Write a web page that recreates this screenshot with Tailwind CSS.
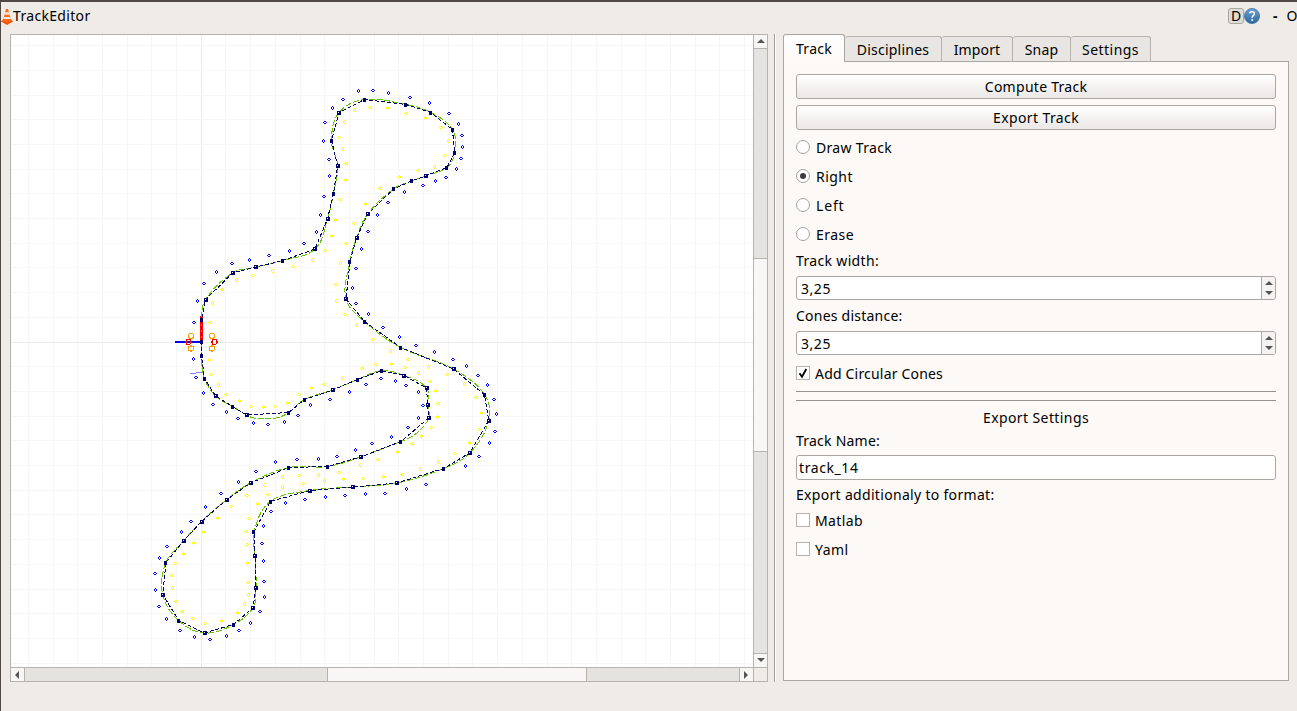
<!DOCTYPE html>
<html lang="en">
<head>
<meta charset="utf-8">
<title>TrackEditor</title>
<script src="https://cdn.jsdelivr.net/npm/@tailwindcss/browser@4"></script>
</head>
<body class="h-[711px] w-[1297px] overflow-hidden border-t-2 border-l border-[#504842] bg-[#efebe7] font-['Noto_Sans','Open_Sans',sans-serif] text-[14px] leading-none text-black">
<header class="flex h-8 items-center pb-1">
  <svg class="mt-px h-4 w-3 shrink-0" viewBox="0 0 12 16">
    <path d="M0 12.5 2.5 10h7l2.5 2.5L6 16Z" fill="#f4560a"/>
    <path d="M5 0h2l3 11.5Q6 14 2 11.5Z" fill="#ff6a14"/>
    <path d="M4.2 3.3h3.6l.7 2.4H3.5ZM3 8h6l.6 2H2.4Z" fill="#f5e7dc"/>
  </svg>
  <span data-w="77.5">TrackEditor</span>
  <div class="ml-auto flex h-full w-[69px] items-center">
    <span class="flex h-4 w-4 shrink-0 items-center justify-center rounded-[3px] border border-[#aaa6a2] bg-[#dfdbd8]">D</span>
    <svg class="h-4 w-4 shrink-0" viewBox="0 0 16 16">
      <defs><linearGradient id="help" x2="0" y2="1"><stop stop-color="#6da0cf"/><stop offset="1" stop-color="#2a689f"/></linearGradient></defs>
      <circle cx="8" cy="8" r="7.6" fill="url(#help)" stroke="#34699b" stroke-width=".7"/>
      <path d="M5.6 5.4C6 3.2 10.4 3.1 10.4 5.8 10.4 7.6 8.1 7.7 8.1 9.7" fill="none" stroke="#fff" stroke-width="1.5"/>
      <circle cx="8.1" cy="12.1" r="1" fill="#fff"/>
    </svg>
    <span class="ml-[13px] font-bold">-</span>
    <span class="ml-[9px]">O</span>
  </div>
</header>

<main class="flex h-[648px] pl-[9px]">
  <section class="grid h-[648px] w-[758px] shrink-0 grid-cols-[742px_14px] grid-rows-[632px_14px] border border-[#b6b2ae]">
    <svg id="canvas" class="h-[632px] w-[742px] bg-white" viewBox="11 35 742 632" shape-rendering="crispEdges" fill="none"></svg>
    <div class="flex flex-col border-l border-[#b6b2ae] bg-[#e4e3df]">
      <div class="flex h-[14px] shrink-0 items-center justify-center border-b border-[#b6b2ae] bg-[#f7f6f4] pb-px"><svg class="h-1 w-2" viewBox="0 0 8 4"><path d="M4 0 8 4H0Z" fill="#555"/></svg></div>
      <div class="mt-[209px] h-[194px] shrink-0 border-y border-[#b6b2ae] bg-[#f8f7f6]"></div>
      <div class="mt-auto flex h-[14px] shrink-0 items-center justify-center border-t border-[#b6b2ae] bg-[#f7f6f4] pb-px"><svg class="h-1 w-2" viewBox="0 0 8 4"><path d="M0 0H8L4 4Z" fill="#555"/></svg></div>
    </div>
    <div class="flex border-t border-[#b6b2ae] bg-[#e4e3df]">
      <div class="flex w-[14px] shrink-0 items-center justify-center border-r border-[#b6b2ae] bg-[#f7f6f4] pr-px"><svg class="h-2 w-1" viewBox="0 0 4 8"><path d="M4 0V8L0 4Z" fill="#555"/></svg></div>
      <div class="ml-[302px] w-[260px] shrink-0 border-x border-[#b6b2ae] bg-[#f8f7f6]"></div>
      <div class="ml-auto flex w-[14px] shrink-0 items-center justify-center border-l border-[#b6b2ae] bg-[#f7f6f4] pr-px"><svg class="h-2 w-1" viewBox="0 0 4 8"><path d="M0 0 4 4 0 8Z" fill="#555"/></svg></div>
    </div>
    <div class="border-t border-l border-[#b6b2ae] bg-[#efebe7]"></div>
  </section>

  <div class="ml-[6px] h-[648px] w-[2px] shrink-0 border-l border-[#a09c98] bg-white"></div>

  <section class="ml-[7px] flex h-[647px] w-[506px] shrink-0 flex-col">
    <nav class="z-10 -mb-px flex h-7 shrink-0 items-end">
      <div class="flex h-7 w-[62px] shrink-0 justify-center rounded-t-[3px] border border-b-0 border-[#aaa6a2] bg-gradient-to-b from-white to-[#fdf9f6] pt-[7px]"><span data-w="36">Track</span></div>
      <div class="flex h-[26px] w-[97px] shrink-0 justify-center rounded-t-[3px] border border-l-0 border-[#b6b2ae] border-b-[#aaa6a2] bg-[#e9e5e2] pt-[6px]"><span data-w="72.5">Disciplines</span></div>
      <div class="flex h-[26px] w-[71px] shrink-0 justify-center rounded-t-[3px] border border-l-0 border-[#b6b2ae] border-b-[#aaa6a2] bg-[#e9e5e2] pt-[6px]"><span data-w="46.5">Import</span></div>
      <div class="flex h-[26px] w-[58px] shrink-0 justify-center rounded-t-[3px] border border-l-0 border-[#b6b2ae] border-b-[#aaa6a2] bg-[#e9e5e2] pt-[6px]"><span data-w="33.5">Snap</span></div>
      <div class="flex h-[26px] w-[80px] shrink-0 justify-center rounded-t-[3px] border border-l-0 border-[#b6b2ae] border-b-[#aaa6a2] bg-[#e9e5e2] pt-[6px]"><span data-w="57">Settings</span></div>
    </nav>
    <div class="flex grow flex-col border border-[#aaa6a2] bg-[#fdf9f6] px-3 pt-3">
      <button class="flex h-[25px] shrink-0 items-center justify-center rounded-[3px] border border-[#aaa6a2] bg-gradient-to-b from-white to-[#ebe8e6]"><span data-w="102.5">Compute Track</span></button>
      <button class="mt-1.5 flex h-[25px] shrink-0 items-center justify-center rounded-[3px] border border-[#aaa6a2] bg-gradient-to-b from-white to-[#ebe8e6]"><span data-w="86">Export Track</span></button>
      <div class="mt-[3px] flex h-[29px] items-center gap-1.5"><i class="mb-px h-3.5 w-3.5 rounded-full border border-[#a5a19e] bg-white"></i><span data-w="76">Draw Track</span></div>
      <div class="flex h-[29px] items-center gap-1.5"><i class="mb-px flex h-3.5 w-3.5 items-center justify-center rounded-full border border-[#a5a19e] bg-white"><b class="h-1.5 w-1.5 rounded-full bg-[#3c3c3c]"></b></i><span data-w="37">Right</span></div>
      <div class="flex h-[29px] items-center gap-1.5"><i class="mb-px h-3.5 w-3.5 rounded-full border border-[#a5a19e] bg-white"></i><span data-w="28.5">Left</span></div>
      <div class="flex h-[29px] items-center gap-1.5"><i class="mb-px h-3.5 w-3.5 rounded-full border border-[#a5a19e] bg-white"></i><span data-w="38">Erase</span></div>
      <label class="flex h-6 items-center"><span data-w="83">Track width:</span></label>
      <div class="mt-[3px] flex h-6 rounded-[3px] border border-[#aaa6a2] bg-white">
        <div class="flex grow items-center pl-1 pt-0.5"><span data-w="30">3,25</span></div>
        <div class="flex w-[14px] flex-col items-center justify-center gap-1.5 rounded-r-[2px] border-l border-[#aaa6a2] bg-[#f5f3f1]"><svg class="h-1 w-2" viewBox="0 0 8 4"><path d="M4 0 8 4H0Z" fill="#555"/></svg><svg class="h-1 w-2" viewBox="0 0 8 4"><path d="M0 0H8L4 4Z" fill="#555"/></svg></div>
      </div>
      <label class="flex h-[31px] items-center"><span data-w="106.5">Cones distance:</span></label>
      <div class="flex h-6 rounded-[3px] border border-[#aaa6a2] bg-white">
        <div class="flex grow items-center pl-1 pt-0.5"><span data-w="30">3,25</span></div>
        <div class="flex w-[14px] flex-col items-center justify-center gap-1.5 rounded-r-[2px] border-l border-[#aaa6a2] bg-[#f5f3f1]"><svg class="h-1 w-2" viewBox="0 0 8 4"><path d="M4 0 8 4H0Z" fill="#555"/></svg><svg class="h-1 w-2" viewBox="0 0 8 4"><path d="M0 0H8L4 4Z" fill="#555"/></svg></div>
      </div>
      <div class="flex h-9 items-center gap-[5px]"><i class="h-3.5 w-3.5 border border-[#b6b2ae] bg-white"><svg class="h-3 w-3" viewBox="0 0 12 12"><path d="M2.5 6.2 5 9.8 9.3 2" fill="none" stroke="#000" stroke-width="1.8"/></svg></i><span class="pt-0.5" data-w="128">Add Circular Cones</span></div>
      <div class="h-[10px] shrink-0 border-y border-[#96928f]"></div>
      <div class="flex h-[33px] items-center justify-center"><span data-w="106">Export Settings</span></div>
      <label class="flex h-[14px] items-center"><span data-w="84">Track Name:</span></label>
      <div class="mt-[7px] flex h-[25px] shrink-0 items-center rounded-[3px] border border-[#aaa6a2] bg-white pl-0.5"><span data-w="59.5">track_14</span></div>
      <label class="flex h-[26px] items-center pt-1"><span data-w="198.5">Export additionaly to format:</span></label>
      <div class="flex h-[29px] items-center gap-[5px]"><i class="mb-px h-3.5 w-3.5 border border-[#b6b2ae] bg-white"></i><span data-w="48">Matlab</span></div>
      <div class="flex h-[29px] items-center gap-[5px]"><i class="mb-px h-3.5 w-3.5 border border-[#b6b2ae] bg-white"></i><span data-w="33.5">Yaml</span></div>
    </div>
  </section>
</main>

<script>
// Give each label its set width through letter spacing.
const ruler = document.createElement('canvas').getContext('2d');
ruler.font = '14px "Noto Sans"';
document.querySelectorAll('[data-w]').forEach(el => {
  el.style.whiteSpace = 'nowrap';
  const natural = ruler.measureText(el.textContent).width;
  el.style.letterSpacing = (+el.dataset.w - natural) / el.textContent.length + 'px';
});

const parts = [];
const add = s => parts.push(s);

// Grid, with the two axes a little darker.
for (let k = -8; k <= 22; k++) {
  const x = Math.floor(201.2 + 24.7 * k);
  add(`<path d="M${x + .5} 35V667" stroke="${k ? '#f6f6f6' : '#ebebeb'}"/>`);
}
for (let k = -12; k <= 13; k++) {
  const y = Math.floor(342.05 + 24.7 * k);
  add(`<path d="M11 ${y + .5}H753" stroke="${k ? '#f6f6f6' : '#ebebeb'}"/>`);
}

// Control points in driving order: x, y, hollow.
const track = [
 [201.5,342,0],[201.5,320,0],[205.5,299.7,1],[232.5,273,1],[256,267,1],[283,260.5,0],[315,249,1],[327.5,219,1],
 [333.5,193.5,0],[337.7,165.5,1],[331.5,140.5,0],[339,112.7,1],[364.5,99.5,0],[406,104.5,0],[430.7,112.5,0],
 [452.5,129.5,0],[454.5,153,0],[447,167.5,0],[425.5,176,1],[411.5,181,0],[393.5,189,0],[367.7,214,1],[356.5,238,1],
 [350,261.5,0],[346,299,1],[364.5,321.5,0],[400.7,347.5,0],[453.5,369,1],[484.5,394.7,0],[488.7,420.7,1],
 [469.7,453,1],[443.5,468.5,0],[397,483,1],[352.5,487,1],[309.7,490.5,1],[270.5,501.5,0],[254,531.5,0],[255,555.5,1],
 [256,587.5,1],[253,607.7,1],[233.5,624.5,0],[204.5,633,1],[178.7,620.5,0],[162.7,594.5,1],[166,562.5,0],[183.5,541,1],
 [201.5,521.5,1],[226.7,499.7,1],[251,482.7,1],[289,467.5,0],[327.5,466.5,0],[360.5,457,1],[401,441.5,0],[428.7,418,1],
 [427.7,404.5,1],[426.5,388,1],[404,375.5,1],[381.5,370.7,0],[357.5,379.5,0],[332.5,390,1],[304.5,399.5,0],
 [288.7,412.5,0],[246.5,415,1],[232.5,406.5,0],[215.5,396,1],[204.5,378.5,0],[201.5,355.7,0]];
// The smoothed line swings wide of the control polygon in two bends.
const smooth = track.flatMap(p =>
  p[0] === 401 ? [p, [411,437], [420,430]] :
  p[0] === 288.7 ? [p, [276,418], [254,418]] : [p]);
const n = smooth.length, at = i => smooth[(i + n) % n];
let curve = `M${smooth[0][0]} ${smooth[0][1]}`;
for (let i = 0; i < n; i++) {
  const a = at(i - 1), b = at(i), c = at(i + 1), d = at(i + 2);
  const len = Math.hypot(c[0] - b[0], c[1] - b[1]);
  const t1 = Math.hypot(c[0] - a[0], c[1] - a[1]), t2 = Math.hypot(d[0] - b[0], d[1] - b[1]), h = len * .36;
  curve += `C${b[0] + (c[0] - a[0]) / t1 * h} ${b[1] + (c[1] - a[1]) / t1 * h} ${c[0] - (d[0] - b[0]) / t2 * h} ${c[1] - (d[1] - b[1]) / t2 * h} ${c[0]} ${c[1]}`;
}
add('<path d="M201.5 316V341" stroke="#f00" stroke-width="3"/>');
add('<path d="M175 342H201" stroke="#0000e6" stroke-width="2"/>');
add('<path d="M190 373.5 202 372.5" stroke="#8080ff"/><path d="M201.5 359 202.5 373" stroke="#f77"/>');
add(`<path d="${curve}" stroke="#63c500" stroke-dasharray="6 2"/>`);
add(`<path d="M${track.map(p => p[0] + ' ' + p[1]).join('L')}Z" stroke="#00006b" stroke-dasharray="4 2"/>`);
for (const [x, y, hollow] of track) {
  const l = Math.round(x - 2), t = Math.round(y - 2);
  add(`<rect x="${l}" y="${t}" width="${hollow ? 4 : 3}" height="4" fill="#00006b"/>`);
  if (hollow) add(`<rect x="${l + 1}" y="${t + 1}" width="1" height="1" fill="#fff"/>`);
}

// Cones, listed per map tile: tile origin, then x y pairs in thirds of a pixel.
function cones(ox, oy, color, list) {
  const v = list.split(/[ ,]+/).map(Number);
  for (let i = 0; i < v.length; i += 2) {
    const cx = ox + v[i] / 3, cy = oy + v[i + 1] / 3;
    if (i % 4) {
      const l = Math.round(cx - 2), t = Math.round(cy - 1.5);
      add(`<path d="M${l + 1} ${t}h2v1h-2zM${l} ${t + 1}h1v1h-1zM${l + 3} ${t + 1}h1v1h-1zM${l + 1} ${t + 2}h2v1h-2z" fill="${color}"/>`);
    } else {
      const l = Math.round(cx - 1.5), t = Math.round(cy - 2);
      add(`<path d="M${l + 1} ${t}h1v1h-1zM${l} ${t + 1}h1v2h-1zM${l + 2} ${t + 1}h1v2h-1zM${l + 1} ${t + 3}h1v1h-1z" fill="${color}"/>`);
    }
  }
}
const B = '#0000ff', Y = '#ffff00';
cones(300, 70, B, '174 64,220 60,266 68,329 82,388 99,448 130,475 163,486 197,487 232,484 266,468 298,438 322,405 334,369 347,313 367,265 396,231 436,129 88,97 114,75 157,70 214,87 268,88 319,73 379,60 436');
cones(300, 70, Y, '163 121,211 111,263 115,319 129,375 145,424 173,444 214,434 256,403 290,355 300,297 322,241 354,195 403,162 460,132 157,117 202,127 237,139 280,135 331,121 389,106 449');
cones(150, 220, B, '498 37,461 70,418 93,358 106,298 121,247 131,199 156,162 190,141 243,131 307,131 418,139 471,161 520,190 553,228 576,265 595,310 609,355 613,402 607,444 586,481 556,540 538,599 517,649 492');
cones(150, 220, Y, '544 48,525 91,488 120,428 139,368 154,310 167,260 179,217 208,187 250,179 307,179 421,184 462,205 495,229 522,267 544,304 559,341 561,375 559,411 550,448 524,484 505,523 492,577 474,635 445');
cones(330, 210, B, '141 16,114 64,94 117,79 174,67 234,79 279,115 313,160 351,208 382,258 406,312 426,369 448,409 468,445 496,473 526,492 567,498 613,494 664,477 700,448 738,405 769,154 505,196 513,229 526,264 547,280 585,264 625,234 653,184 681,127 700,75 721,21 739');
cones(330, 210, Y, '16 29,71 40,4 78,49 100,32 160,19 224,19 272,46 312,79 346,130 387,181 422,235 449,295 471,351 493,402 523,439 561,455 610,447 658,418 699,375 731,325 756,139 463,184 463,226 472,265 490,300 513,316 544,325 580,323 621,304 652,274 679,246 700,202 725,145 747,90 766,97 475');
cones(300, 420, B, '55 117,14 238,76 232,135 226,195 223,256 219,318 208,379 192');
cones(300, 420, Y, '55 165,10 190,72 184,118 157,131 178,190 175,250 170,307 162,361 147');
cones(140, 440, B, '406 67,472 57,535 57,349 93,295 125,244 160,196 201,153 244,124 276,82 318,58 354,46 401,46 449,58 498,79 538,120 571,163 591,210 598,258 589,298 570,331 549,361 514,373 472,372 425,370 363,365 310,369 259,393 214,436 188');
cones(140, 440, Y, '426 112,478 105,427 141,385 162,373 135,322 165,352 193,274 198,231 235,328 234,189 277,319 273,159 310,322 314,129 343,106 371,322 369,97 407,98 445,323 427,324 466,109 485,313 492,127 513,292 520,158 535,244 544,196 550');

// Large start and finish cones.
for (const [x, y, c] of [[191,335.7,'#ff9d00'],[191,348.5,'#ff9d00'],[212,335.7,'#ff9d00'],[212,348.5,'#ff9d00'],[188.5,342,'#f00'],[214.5,342,'#f00']])
  add(`<circle cx="${x}" cy="${y}" r="2.6" stroke="${c}"/>`);
document.getElementById('canvas').innerHTML = parts.join('');
</script>
</body>
</html>
